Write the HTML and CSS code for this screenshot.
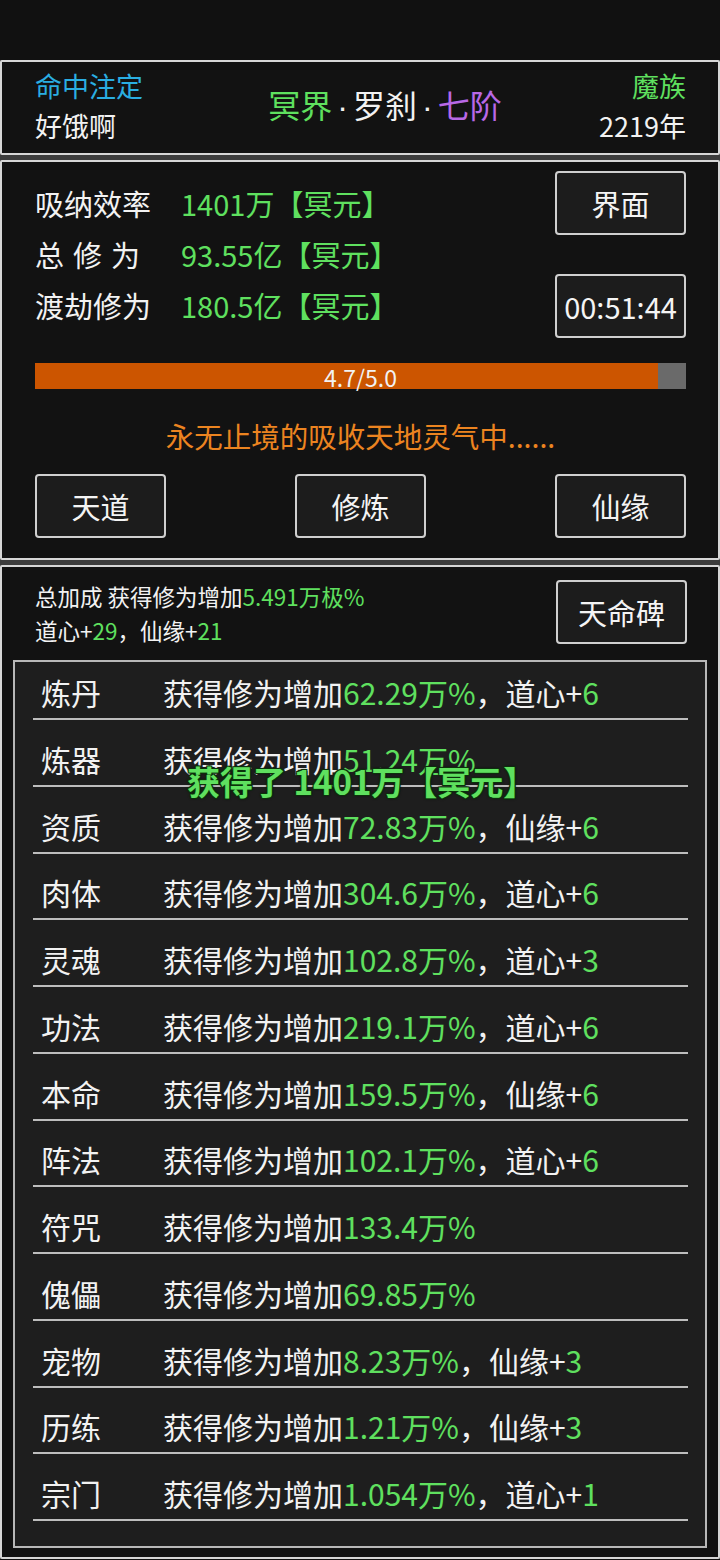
FILE: index.html
```html
<!DOCTYPE html>
<html lang="zh-CN">
<head>
<meta charset="utf-8">
<title>修炼</title>
<link rel="stylesheet" href="styles.css">
</head>
<body>
<div class="topbar"></div>
<div class="panels">
  <section class="panel header">
    <div class="hcol">
      <div class="cyan">命中注定</div>
      <div>好饿啊</div>
    </div>
    <div class="realm"><span class="green">冥界</span><span class="dot">·</span>罗刹<span class="dot">·</span><span class="purple">七阶</span></div>
    <div class="hcol right">
      <div class="green">魔族</div>
      <div>2219年</div>
    </div>
  </section>

  <section class="panel main">
    <div class="stats">
      <div class="statlist">
        <div class="stat"><span class="slabel">吸纳效率</span><span class="green">1401万【冥元】</span></div>
        <div class="stat"><span class="slabel spaced">总修为</span><span class="green">93.55亿【冥元】</span></div>
        <div class="stat"><span class="slabel">渡劫修为</span><span class="green">180.5亿【冥元】</span></div>
      </div>
      <div class="sidebtns">
        <div class="btn">界面</div>
        <div class="btn">00:51:44</div>
      </div>
    </div>
    <div class="bar"><div class="fill" style="width:95.7%"></div><span class="bartext">4.7/5.0</span></div>
    <div class="status">永无止境的吸收天地灵气中......</div>
    <div class="actions">
      <div class="btn">天道</div>
      <div class="btn">修炼</div>
      <div class="btn">仙缘</div>
    </div>
  </section>

  <section class="panel bonus">
    <div class="bonushead">
      <div class="bonustext">
        <div>总加成 获得修为增加<span class="green">5.491万极%</span></div>
        <div>道心+<span class="green">29</span>，仙缘+<span class="green">21</span></div>
      </div>
      <div class="btn">天命碑</div>
    </div>
    <div class="listbox">
      <div class="row"><span class="rlabel">炼丹</span><span>获得修为增加<span class="green">62.29万%</span>，道心+<span class="green">6</span></span></div>
      <div class="row"><span class="rlabel">炼器</span><span>获得修为增加<span class="green">51.24万%</span></span></div>
      <div class="row"><span class="rlabel">资质</span><span>获得修为增加<span class="green">72.83万%</span>，仙缘+<span class="green">6</span></span></div>
      <div class="row"><span class="rlabel">肉体</span><span>获得修为增加<span class="green">304.6万%</span>，道心+<span class="green">6</span></span></div>
      <div class="row"><span class="rlabel">灵魂</span><span>获得修为增加<span class="green">102.8万%</span>，道心+<span class="green">3</span></span></div>
      <div class="row"><span class="rlabel">功法</span><span>获得修为增加<span class="green">219.1万%</span>，道心+<span class="green">6</span></span></div>
      <div class="row"><span class="rlabel">本命</span><span>获得修为增加<span class="green">159.5万%</span>，仙缘+<span class="green">6</span></span></div>
      <div class="row"><span class="rlabel">阵法</span><span>获得修为增加<span class="green">102.1万%</span>，道心+<span class="green">6</span></span></div>
      <div class="row"><span class="rlabel">符咒</span><span>获得修为增加<span class="green">133.4万%</span></span></div>
      <div class="row"><span class="rlabel">傀儡</span><span>获得修为增加<span class="green">69.85万%</span></span></div>
      <div class="row"><span class="rlabel">宠物</span><span>获得修为增加<span class="green">8.23万%</span>，仙缘+<span class="green">3</span></span></div>
      <div class="row"><span class="rlabel">历练</span><span>获得修为增加<span class="green">1.21万%</span>，仙缘+<span class="green">3</span></span></div>
      <div class="row"><span class="rlabel">宗门</span><span>获得修为增加<span class="green">1.054万%</span>，道心+<span class="green">1</span></span></div>
      <div class="toast">获得了 1401万【冥元】</div>
    </div>
  </section>
</div>
</body>
</html>
```

FILE: styles.css
```css
* { box-sizing: border-box; }
html, body { margin: 0; padding: 0; }
body {
  width: 720px;
  height: 1560px;
  overflow: hidden;
  background: #111111;
  color: #f2f2f2;
  font-family: "Noto Sans CJK SC", "Noto Sans", sans-serif;
}
.topbar { height: 60px; background: #111111; }
.panels {
  display: flex;
  flex-direction: column;
  gap: 5px;
  background: #3c3c3c;
}
.panel {
  background: #121212;
  border: 2px solid #d6d6d6;
  border-radius: 2px;
}
.green { color: #5fe05f; }
.cyan { color: #2aaee2; }
.purple { color: #b868e6; }

/* header */
.header {
  height: 95px;
  display: flex;
  align-items: center;
  justify-content: space-between;
  padding: 0 32px 4px 33px;
}
.hcol { font-size: 27px; line-height: 40px; }
.hcol.right { text-align: right; }
.realm { font-size: 32px; line-height: 44px; padding-left: 28px; }
.dot {
  font-family: "Liberation Sans", "DejaVu Sans", sans-serif;
  margin: 0 5px;
}

/* main */
.main {
  height: 400px;
  padding: 9px 32px 0 33px;
  display: flex;
  flex-direction: column;
}
.stats { display: flex; justify-content: space-between; }
.statlist { padding-top: 7px; }
.stat { font-size: 29px; line-height: 51px; display: flex; }
.slabel { width: 146px; }
.spaced { letter-spacing: 9px; }
.sidebtns { display: flex; flex-direction: column; gap: 39px; }
.btn {
  width: 131px;
  height: 64px;
  border: 2px solid #cfcfcf;
  border-radius: 4px;
  background: #1c1c1c;
  display: flex;
  align-items: center;
  justify-content: center;
  font-size: 29px;
  color: #f4f4f4;
}
.bar {
  position: relative;
  margin-top: 25px;
  height: 26px;
  background: #6a6a6a;
}
.fill { height: 100%; background: #cc5500; }
.bartext {
  position: absolute;
  left: 0; right: 0; top: 0;
  text-align: center;
  font-size: 23px;
  line-height: 28px;
  color: #f2f2f2;
}
.status {
  margin-top: 27px;
  text-align: center;
  font-size: 28.5px;
  line-height: 40px;
  color: #ec8420;
}
.actions {
  margin-top: 18px;
  display: flex;
  justify-content: space-between;
}

/* bonus */
.bonus {
  height: 994px;
  padding: 12px 11px 0 11px;
}
.bonushead {
  display: flex;
  justify-content: space-between;
  padding: 0 20px 0 22px;
}
.bonustext { font-size: 22.5px; line-height: 34px; }
.bonus .btn { margin-top: 1px; }
.listbox {
  position: relative;
  margin-top: 13px;
  height: 888px;
  border: 2px solid #b8b8b8;
  background: #1e1e1e;
  padding: 0 17px 0 18px;
}
.row {
  height: 66.75px;
  display: flex;
  align-items: flex-end;
  padding: 0 0 6px 8px;
  border-bottom: 2px solid #bdbdbd;
  font-size: 30px;
  line-height: 40px;
}
.row:first-child { height: 58px; }
.rlabel { width: 122px; flex: none; }
.toast {
  position: absolute;
  left: 172px;
  top: 97px;
  font-size: 33px;
  font-weight: bold;
  line-height: 44px;
  color: #5fe05f;
  text-shadow: -1px -1px 0 #0b300b, 1px -1px 0 #0b300b, -1px 1px 0 #0b300b, 1px 1px 0 #0b300b, 0 0 3px #000;
  white-space: nowrap;
}
```
